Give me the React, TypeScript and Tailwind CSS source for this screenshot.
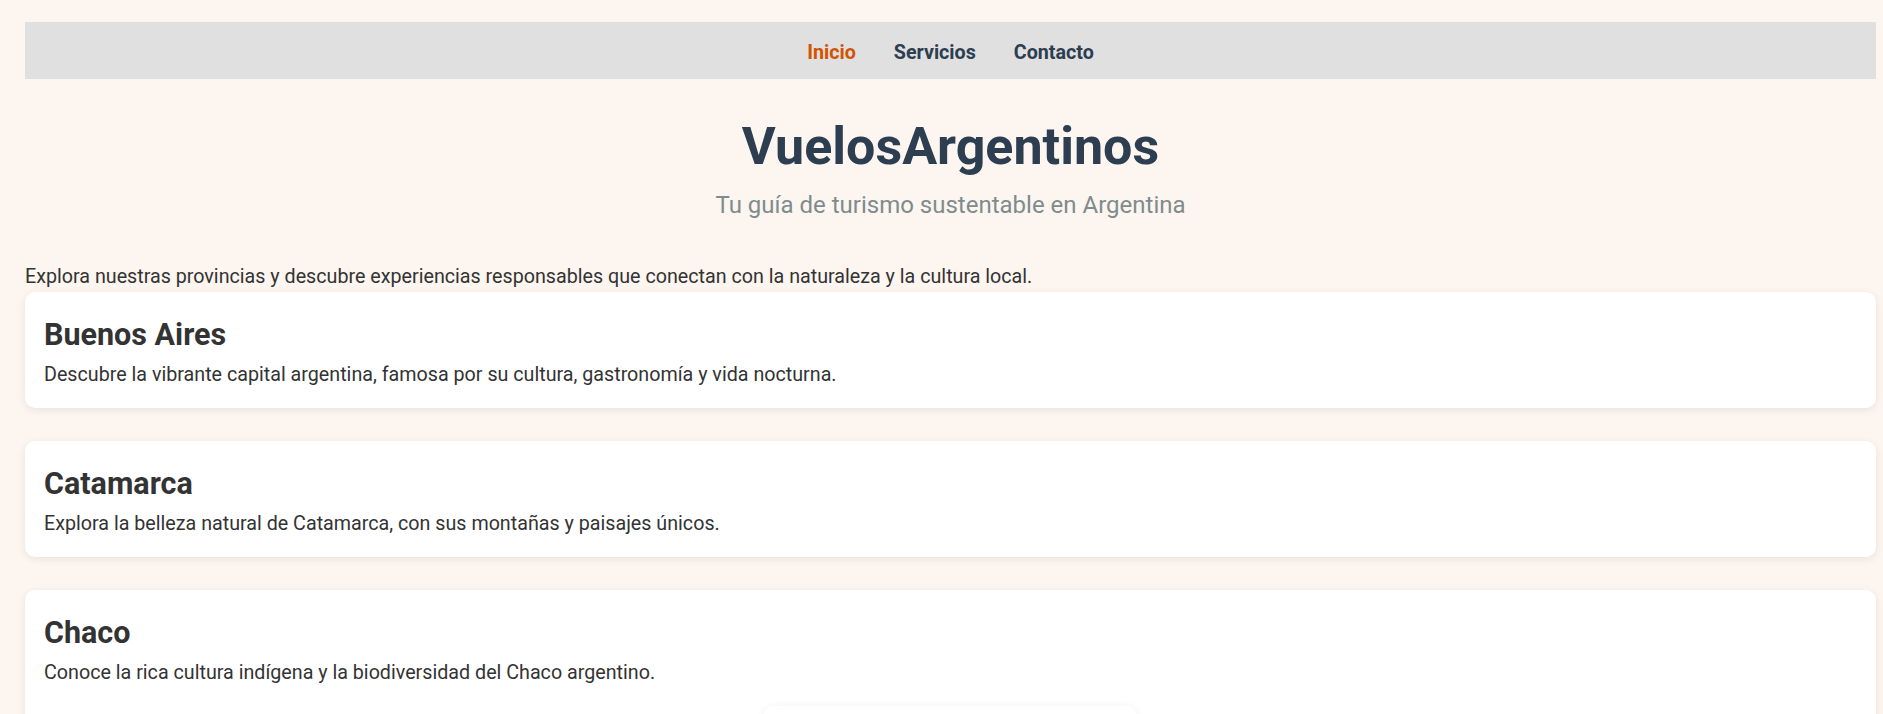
const provincias = [
  {
    nombre: 'Buenos Aires',
    descripcion: 'Descubre la vibrante capital argentina, famosa por su cultura, gastronomía y vida nocturna.',
  },
  {
    nombre: 'Catamarca',
    descripcion: 'Explora la belleza natural de Catamarca, con sus montañas y paisajes únicos.',
  },
  {
    nombre: 'Chaco',
    descripcion: 'Conoce la rica cultura indígena y la biodiversidad del Chaco argentino.',
    extra: true,
  },
];

export default function App() {
  return (
    <div className="min-h-screen bg-[#fdf5f0] pl-[25px] pr-[7px] pt-[22px] font-['Roboto',sans-serif] text-[#333333]">
      <nav className="box-border flex h-[57px] items-start justify-center gap-[38px] bg-[#e0e0e0] pt-[4px]">
        <a href="#" className="text-[19.7px] font-bold leading-[53px] text-[#d35400]">Inicio</a>
        <a href="#" className="text-[19.7px] font-bold leading-[53px] text-[#2c3e50]">Servicios</a>
        <a href="#" className="text-[19.7px] font-bold leading-[53px] text-[#2c3e50]">Contacto</a>
      </nav>

      <header className="text-center">
        <h1 className="mt-[36px] text-[52px] font-bold leading-[64px] text-[#2c3e50]">VuelosArgentinos</h1>
        <p className="mt-[11px] text-[24px] leading-[30px] text-[#7f8c8d]">Tu guía de turismo sustentable en Argentina</p>
      </header>

      <p className="mt-[44px] text-[19.7px] leading-[26px]">
        Explora nuestras provincias y descubre experiencias responsables que conectan con la naturaleza y la cultura local.
      </p>

      <div className="mt-[2px] flex flex-col gap-[33px]">
        {provincias.map((p) => (
          <section
            key={p.nombre}
            className="rounded-[10px] bg-white pb-[20px] pl-[19px] pr-[20px] pt-[25px] shadow-[0_2px_8px_rgba(0,0,0,0.08)]"
          >
            <h2 className="text-[30.5px] font-bold leading-[36px] text-[#333333]">{p.nombre}</h2>
            <p className="mt-[9px] text-[19.7px] leading-[26px]">{p.descripcion}</p>
            {p.extra ? (
              <div className="mx-auto mt-[20px] h-[220px] w-[374px] rounded-[10px] bg-white shadow-[0_2px_10px_rgba(0,0,0,0.08)]" />
            ) : null}
          </section>
        ))}
      </div>
    </div>
  );
}
